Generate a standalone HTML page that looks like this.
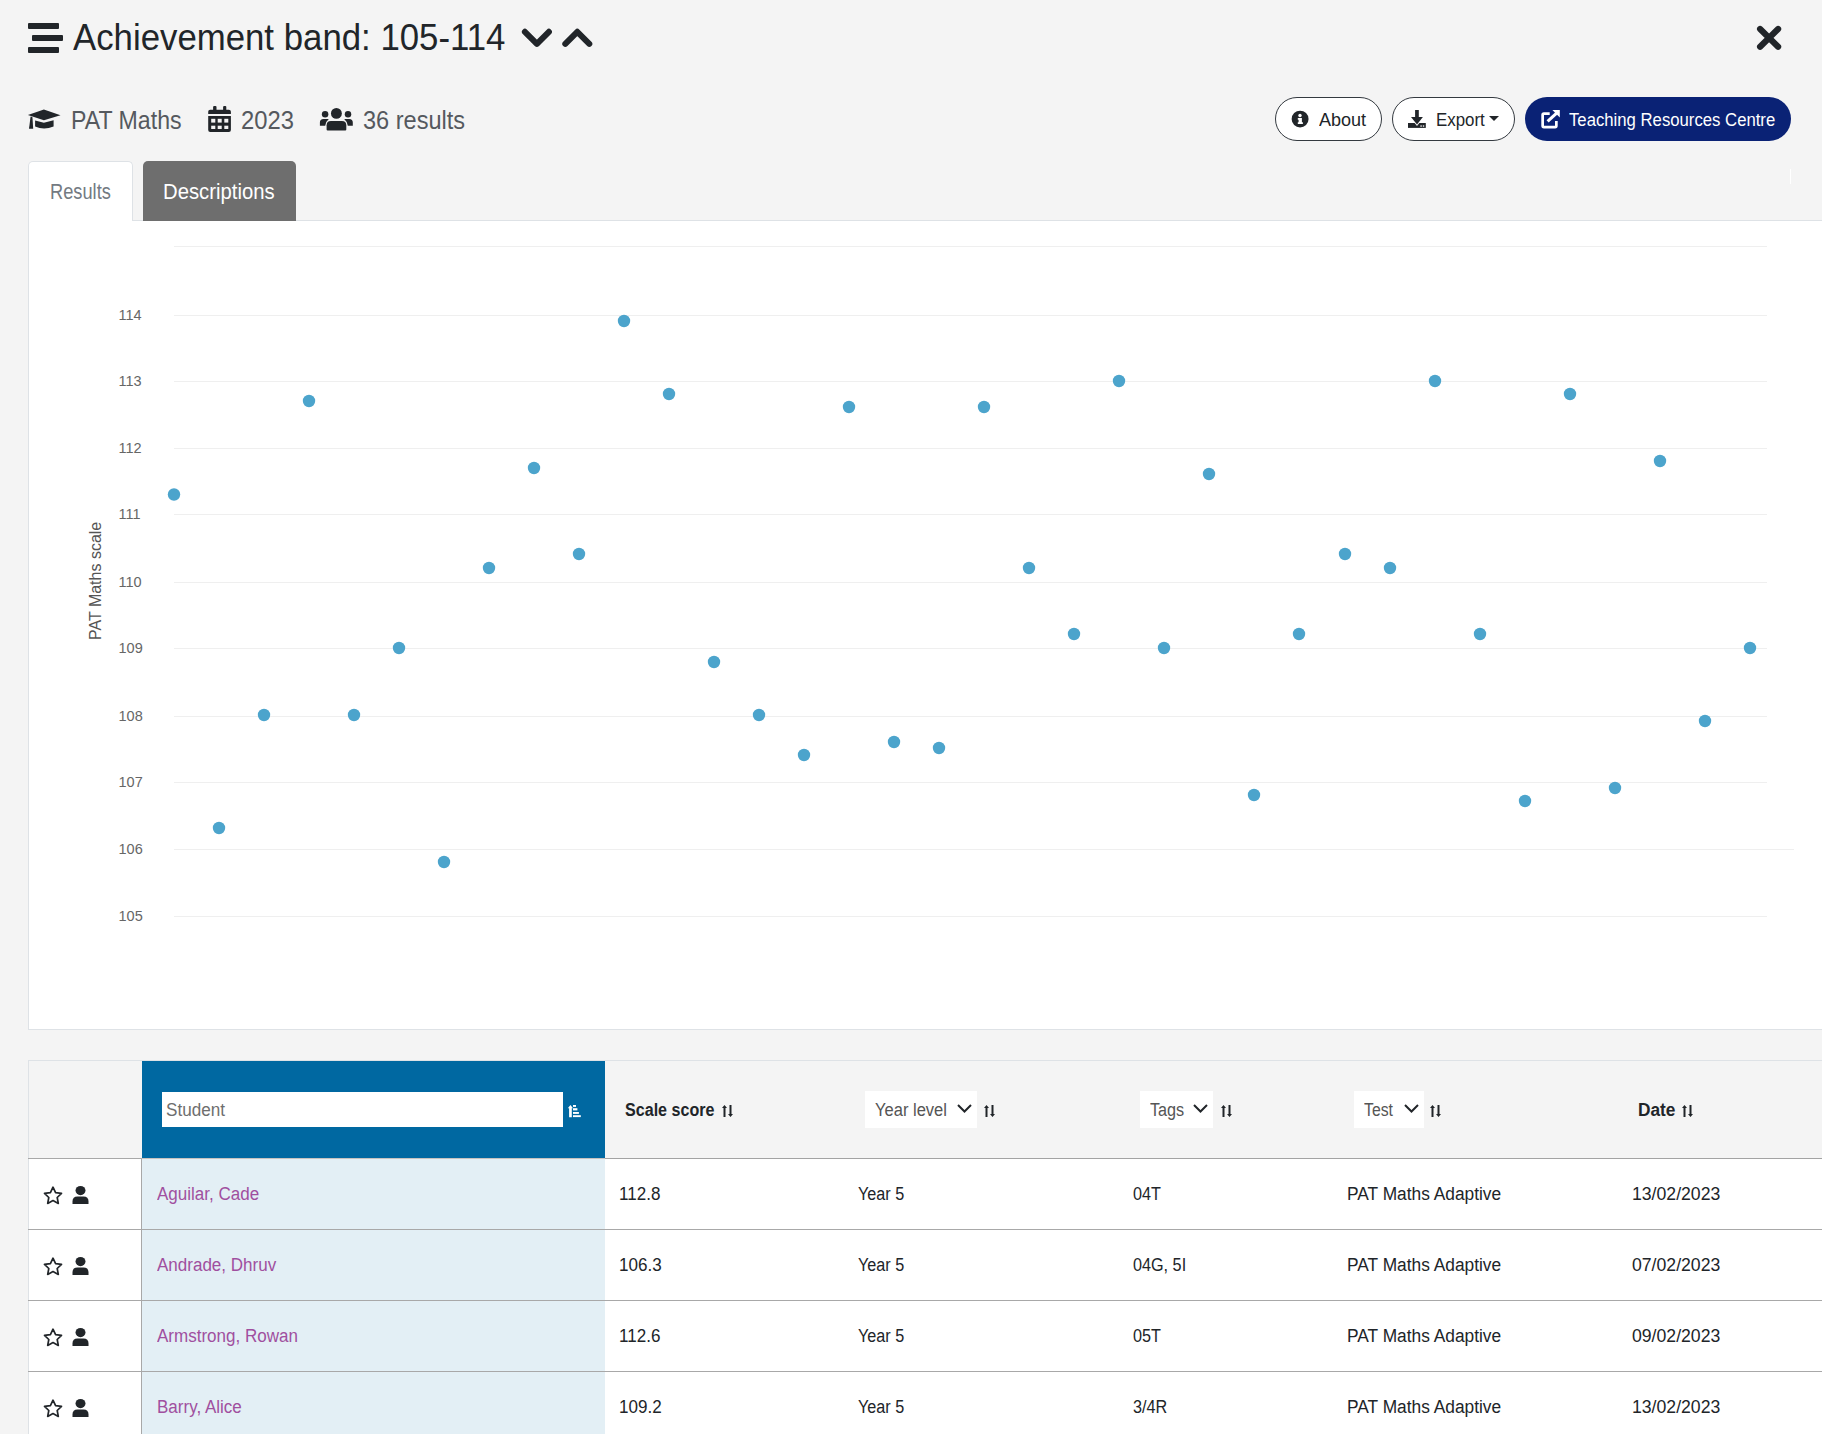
<!DOCTYPE html>
<html><head><meta charset="utf-8"><title>Achievement band</title>
<style>
html,body{margin:0;padding:0;}
body{width:1822px;height:1434px;overflow:hidden;position:relative;background:#f4f4f4;font-family:"Liberation Sans",sans-serif;}
.t{position:absolute;white-space:nowrap;transform-origin:0 0;}
.r{position:absolute;}
svg{position:absolute;overflow:visible;}
</style></head><body>
<div class="r" style="left:28px;top:23px;width:31px;height:6px;background:#212529;border-radius:1px;"></div>
<div class="r" style="left:32px;top:35px;width:31px;height:6px;background:#212529;border-radius:1px;"></div>
<div class="r" style="left:28px;top:47px;width:31px;height:6px;background:#212529;border-radius:1px;"></div>
<div class="t" style="left:73px;top:20.33px;font-size:36px;line-height:36px;color:#212529;transform:scaleX(0.966);">Achievement band: 105-114</div>
<svg style="left:0;top:0" width="1822" height="60"><path d="M524.9 31.8 L536.9 43.9 L548.9 31.8" fill="none" stroke="#212529" stroke-width="6" stroke-linecap="round" stroke-linejoin="round"/><path d="M565.3 43.9 L577.3 31.8 L589.3 43.9" fill="none" stroke="#212529" stroke-width="6" stroke-linecap="round" stroke-linejoin="round"/><path d="M1760.1 29 L1778.1 46.8 M1778.1 29 L1760.1 46.8" fill="none" stroke="#212529" stroke-width="6.2" stroke-linecap="round"/></svg>
<svg style="left:24px;top:102px" width="40" height="34" viewBox="0 0 40 34">
<path d="M3.9 13 L19.9 7.6 L36.5 13.2 L19.9 18.3 Z" fill="#212529"/>
<path d="M11.1 18.6 L19.9 20.8 L29.6 18.3 L29.6 24.6 Q19.9 28.6 11.1 24.6 Z" fill="#212529"/>
<path d="M6.6 14.5 L8.4 15 L9.2 26.8 L5 26.8 Z" fill="#212529"/>
</svg>
<div class="t" style="left:71px;top:106.99px;font-size:26px;line-height:26px;color:#55595e;transform:scaleX(0.89);">PAT Maths</div>
<svg style="left:202px;top:102px" width="36" height="34" viewBox="0 0 36 34">
<rect x="11.1" y="4" width="3.4" height="5" rx="1" fill="#212529"/><rect x="21.1" y="4" width="3.2" height="5" rx="1" fill="#212529"/>
<path d="M6.2 9.8 Q6.2 7.8 8.2 7.8 L26.9 7.8 Q28.9 7.8 28.9 9.8 L28.9 11.9 L6.2 11.9 Z" fill="#212529"/>
<path d="M6.2 14 L28.9 14 L28.9 27.9 Q28.9 29.9 26.9 29.9 L8.2 29.9 Q6.2 29.9 6.2 27.9 Z" fill="#212529"/>
<g fill="#f4f4f4"><rect x="9.2" y="16.8" width="4.1" height="3.8"/><rect x="15.7" y="16.8" width="4" height="3.8"/><rect x="22.3" y="16.8" width="4" height="3.8"/>
<rect x="9.2" y="23.7" width="4.1" height="3.3"/><rect x="15.7" y="23.7" width="4" height="3.3"/><rect x="22.3" y="23.7" width="4" height="3.3"/></g>
</svg>
<div class="t" style="left:241px;top:106.99px;font-size:26px;line-height:26px;color:#55595e;transform:scaleX(0.915);">2023</div>
<svg style="left:315px;top:102px" width="45" height="34" viewBox="0 0 45 34">
<circle cx="21.4" cy="11.4" r="5.45" fill="#212529"/><circle cx="10.1" cy="12.2" r="3.25" fill="#212529"/><circle cx="33" cy="12.2" r="3.25" fill="#212529"/>
<path d="M11.6 27.4 L11.6 23.3 Q11.6 19 15.9 19 L26.9 19 Q31.3 19 31.3 23.3 L31.3 27.4 Q31.3 28.4 30.3 28.4 L12.6 28.4 Q11.6 28.4 11.6 27.4 Z" fill="#212529"/>
<path d="M4.9 23.7 L4.9 20.6 Q4.9 17 8.5 17 L13.8 17 Q10.9 19.3 10.2 23.7 Z" fill="#212529"/>
<path d="M37.8 23.7 L37.8 20.6 Q37.8 17 34.2 17 L29.2 17 Q32.1 19.3 32.8 23.7 Z" fill="#212529"/>
</svg>
<div class="t" style="left:363px;top:106.99px;font-size:26px;line-height:26px;color:#55595e;transform:scaleX(0.905);">36 results</div>
<div class="r" style="left:1275px;top:97px;width:105px;height:42px;border:1px solid #343a40;border-radius:22px;background:#fff;"></div>
<svg style="left:1291px;top:110px" width="18" height="18" viewBox="0 0 18 18"><circle cx="9.1" cy="9.1" r="8.45" fill="#212529"/><circle cx="9" cy="5.5" r="1.7" fill="#fff"/><path d="M6.8 8 L10.9 8 L10.9 12.2 L11.9 12.2 L11.9 14 L6.8 14 L6.8 12.2 L7.6 12.2 L7.6 9.8 L6.8 9.8 Z" fill="#fff"/></svg>
<div class="t" style="left:1319px;top:111.79px;font-size:17.5px;line-height:17.5px;color:#212529;transform:scaleX(1.03);">About</div>
<div class="r" style="left:1392px;top:97px;width:121px;height:42px;border:1px solid #343a40;border-radius:22px;background:#fff;"></div>
<svg style="left:1408px;top:110px" width="18" height="18" viewBox="0 0 18 18"><rect x="0" y="13" width="17.8" height="4.9" fill="#212529"/><path d="M1.6 6.5 L16.4 6.5 L9 15.9 Z" fill="#fff"/><rect x="7.1" y="0" width="3.7" height="8.5" fill="#212529"/><path d="M3 7.1 L14.9 7.1 L9 14.4 Z" fill="#212529"/><rect x="12.4" y="15.4" width="1.4" height="1.3" fill="#fff"/><rect x="14.8" y="15.4" width="1.4" height="1.3" fill="#fff"/></svg>
<div class="t" style="left:1436px;top:111.79px;font-size:17.5px;line-height:17.5px;color:#212529;transform:scaleX(0.965);">Export</div>
<svg style="left:1489px;top:116px" width="10" height="5"><path d="M0 0 L10 0 L5 5 Z" fill="#212529"/></svg>
<div class="r" style="left:1525px;top:97px;width:266px;height:44px;border-radius:22px;background:#0a2275;"></div>
<svg style="left:1541px;top:110px" width="20" height="19" viewBox="0 0 20 19"><path d="M8.7 3.55 L2.9 3.55 Q1.65 3.55 1.65 4.8 L1.65 15.8 Q1.65 17.05 2.9 17.05 L14.1 17.05 Q15.35 17.05 15.35 15.8 L15.35 11" fill="none" stroke="#fff" stroke-width="2.7"/><path d="M6.6 11.3 L16.2 2.6" stroke="#fff" stroke-width="3.1"/><path d="M11.4 0.1 L18.8 0.1 L18.8 7.5 Z" fill="#fff"/></svg>
<div class="t" style="left:1569px;top:111.69px;font-size:17.5px;line-height:17.5px;color:#fff;transform:scaleX(0.955);">Teaching Resources Centre</div>
<div class="r" style="left:1790px;top:169px;width:1px;height:15px;background:#ffffff;"></div>
<div class="r" style="left:28px;top:220px;width:1800px;height:808px;background:#fff;border:1px solid #dee2e6;"></div>
<div class="r" style="left:28px;top:161px;width:103px;height:59px;background:#fff;border:1px solid #dee2e6;border-bottom:none;border-radius:5px 5px 0 0;"></div>
<div class="t" style="left:49.5px;top:180.20px;font-size:22.8px;line-height:22.8px;color:#737a82;transform:scaleX(0.8);">Results</div>
<div class="r" style="left:143px;top:161px;width:153px;height:60px;background:#6e6e6e;border-radius:5px 5px 0 0;"></div>
<div class="t" style="left:163px;top:180.20px;font-size:22.8px;line-height:22.8px;color:#fff;transform:scaleX(0.89);">Descriptions</div>
<div class="r" style="left:174px;top:246px;width:1593px;height:1px;background:#efefef;"></div>
<div class="r" style="left:174px;top:315px;width:1593px;height:1px;background:#efefef;"></div>
<div class="t" style="left:118.5px;top:307.73px;font-size:14.5px;line-height:14.5px;color:#666666;">114</div>
<div class="r" style="left:174px;top:381px;width:1593px;height:1px;background:#efefef;"></div>
<div class="t" style="left:118.5px;top:373.73px;font-size:14.5px;line-height:14.5px;color:#666666;">113</div>
<div class="r" style="left:174px;top:448px;width:1593px;height:1px;background:#efefef;"></div>
<div class="t" style="left:118.5px;top:440.73px;font-size:14.5px;line-height:14.5px;color:#666666;">112</div>
<div class="r" style="left:174px;top:514px;width:1593px;height:1px;background:#efefef;"></div>
<div class="t" style="left:118.5px;top:506.73px;font-size:14.5px;line-height:14.5px;color:#666666;">111</div>
<div class="r" style="left:174px;top:582px;width:1593px;height:1px;background:#efefef;"></div>
<div class="t" style="left:118.5px;top:574.73px;font-size:14.5px;line-height:14.5px;color:#666666;">110</div>
<div class="r" style="left:174px;top:648px;width:1593px;height:1px;background:#efefef;"></div>
<div class="t" style="left:118.5px;top:640.73px;font-size:14.5px;line-height:14.5px;color:#666666;">109</div>
<div class="r" style="left:174px;top:716px;width:1593px;height:1px;background:#efefef;"></div>
<div class="t" style="left:118.5px;top:708.73px;font-size:14.5px;line-height:14.5px;color:#666666;">108</div>
<div class="r" style="left:174px;top:782px;width:1593px;height:1px;background:#efefef;"></div>
<div class="t" style="left:118.5px;top:774.73px;font-size:14.5px;line-height:14.5px;color:#666666;">107</div>
<div class="r" style="left:174px;top:849px;width:1620px;height:1px;background:#efefef;"></div>
<div class="t" style="left:118.5px;top:841.73px;font-size:14.5px;line-height:14.5px;color:#666666;">106</div>
<div class="r" style="left:174px;top:916px;width:1593px;height:1px;background:#efefef;"></div>
<div class="t" style="left:118.5px;top:908.73px;font-size:14.5px;line-height:14.5px;color:#666666;">105</div>
<div class="t" style="left:101px;top:640px;font-size:16px;line-height:16px;color:#555;transform-origin:0 0;transform:rotate(-90deg) translateY(-13px);">PAT Maths scale</div>
<svg style="left:0;top:0" width="1822" height="1434"><circle cx="174" cy="494.5" r="6.2" fill="#4ca4cc"/><circle cx="219" cy="828" r="6.2" fill="#4ca4cc"/><circle cx="264" cy="715" r="6.2" fill="#4ca4cc"/><circle cx="309" cy="401" r="6.2" fill="#4ca4cc"/><circle cx="354" cy="715" r="6.2" fill="#4ca4cc"/><circle cx="399" cy="648" r="6.2" fill="#4ca4cc"/><circle cx="444" cy="862" r="6.2" fill="#4ca4cc"/><circle cx="489" cy="568" r="6.2" fill="#4ca4cc"/><circle cx="534" cy="468" r="6.2" fill="#4ca4cc"/><circle cx="579" cy="554" r="6.2" fill="#4ca4cc"/><circle cx="624" cy="321" r="6.2" fill="#4ca4cc"/><circle cx="669" cy="394" r="6.2" fill="#4ca4cc"/><circle cx="714" cy="662" r="6.2" fill="#4ca4cc"/><circle cx="759" cy="715" r="6.2" fill="#4ca4cc"/><circle cx="804" cy="755" r="6.2" fill="#4ca4cc"/><circle cx="849" cy="407" r="6.2" fill="#4ca4cc"/><circle cx="894" cy="742" r="6.2" fill="#4ca4cc"/><circle cx="939" cy="748" r="6.2" fill="#4ca4cc"/><circle cx="984" cy="407" r="6.2" fill="#4ca4cc"/><circle cx="1029" cy="568" r="6.2" fill="#4ca4cc"/><circle cx="1074" cy="634" r="6.2" fill="#4ca4cc"/><circle cx="1119" cy="381" r="6.2" fill="#4ca4cc"/><circle cx="1164" cy="648" r="6.2" fill="#4ca4cc"/><circle cx="1209" cy="474" r="6.2" fill="#4ca4cc"/><circle cx="1254" cy="795" r="6.2" fill="#4ca4cc"/><circle cx="1299" cy="634" r="6.2" fill="#4ca4cc"/><circle cx="1345" cy="554" r="6.2" fill="#4ca4cc"/><circle cx="1390" cy="568" r="6.2" fill="#4ca4cc"/><circle cx="1435" cy="381" r="6.2" fill="#4ca4cc"/><circle cx="1480" cy="634" r="6.2" fill="#4ca4cc"/><circle cx="1525" cy="801" r="6.2" fill="#4ca4cc"/><circle cx="1570" cy="394" r="6.2" fill="#4ca4cc"/><circle cx="1615" cy="788" r="6.2" fill="#4ca4cc"/><circle cx="1660" cy="461" r="6.2" fill="#4ca4cc"/><circle cx="1705" cy="721" r="6.2" fill="#4ca4cc"/><circle cx="1750" cy="648" r="6.2" fill="#4ca4cc"/></svg>
<div class="r" style="left:28px;top:1060px;width:1800px;height:400px;background:#f4f4f4;border-left:1px solid #dee2e6;border-top:1px solid #dee2e6;"></div>
<div class="r" style="left:142px;top:1061px;width:463px;height:97px;background:#0068a1;"></div>
<div class="r" style="left:162px;top:1092px;width:401px;height:35px;background:#fff;"></div>
<div class="t" style="left:165.5px;top:1100.76px;font-size:18px;line-height:18px;color:#6e6e6e;transform:scaleX(0.95);">Student</div>
<svg style="left:567px;top:1105px" width="14" height="13" viewBox="0 0 14 13"><path d="M0.8 3.2 L3.45 0 L6 3.2 L4.8 3.2 L4.8 12.2 L2.1 12.2 L2.1 3.2 Z" fill="#fff"/><rect x="6" y="0" width="3" height="1.9" fill="#fff"/><rect x="6" y="3.2" width="4.4" height="2.2" fill="#fff"/><rect x="6" y="7" width="5.9" height="1.9" fill="#fff"/><rect x="6" y="10.2" width="7.8" height="1.9" fill="#fff"/></svg>
<div class="t" style="left:625px;top:1100.76px;font-size:18px;line-height:18px;color:#212529;font-weight:bold;transform:scaleX(0.894);">Scale score</div>
<svg style="left:721.5px;top:1105px" width="11" height="12" viewBox="0 0 11 12"><path d="M0 3 L2.5 0 L5 3 L3.5 3 L3.5 12 L1.5 12 L1.5 3 Z" fill="#212529"/><path d="M6 9 L7.5 9 L7.5 0 L9.5 0 L9.5 9 L11 9 L8.5 12 Z" fill="#212529"/></svg>
<div class="r" style="left:865px;top:1091px;width:112px;height:37px;background:#fff;"></div>
<div class="t" style="left:875px;top:1100.76px;font-size:18px;line-height:18px;color:#555;transform:scaleX(0.918);">Year level</div>
<svg style="left:957px;top:1104px" width="15" height="9"><path d="M1 1 L7.5 7.5 L14 1" fill="none" stroke="#212529" stroke-width="2"/></svg>
<svg style="left:984px;top:1105px" width="11" height="12" viewBox="0 0 11 12"><path d="M0 3 L2.5 0 L5 3 L3.5 3 L3.5 12 L1.5 12 L1.5 3 Z" fill="#212529"/><path d="M6 9 L7.5 9 L7.5 0 L9.5 0 L9.5 9 L11 9 L8.5 12 Z" fill="#212529"/></svg>
<div class="r" style="left:1140px;top:1091px;width:73px;height:37px;background:#fff;"></div>
<div class="t" style="left:1150px;top:1100.76px;font-size:18px;line-height:18px;color:#555;transform:scaleX(0.9);">Tags</div>
<svg style="left:1193px;top:1104px" width="15" height="9"><path d="M1 1 L7.5 7.5 L14 1" fill="none" stroke="#212529" stroke-width="2"/></svg>
<svg style="left:1220.5px;top:1105px" width="11" height="12" viewBox="0 0 11 12"><path d="M0 3 L2.5 0 L5 3 L3.5 3 L3.5 12 L1.5 12 L1.5 3 Z" fill="#212529"/><path d="M6 9 L7.5 9 L7.5 0 L9.5 0 L9.5 9 L11 9 L8.5 12 Z" fill="#212529"/></svg>
<div class="r" style="left:1354px;top:1091px;width:70px;height:37px;background:#fff;"></div>
<div class="t" style="left:1364.3px;top:1100.76px;font-size:18px;line-height:18px;color:#555;transform:scaleX(0.876);">Test</div>
<svg style="left:1404px;top:1104px" width="15" height="9"><path d="M1 1 L7.5 7.5 L14 1" fill="none" stroke="#212529" stroke-width="2"/></svg>
<svg style="left:1430.3px;top:1105px" width="11" height="12" viewBox="0 0 11 12"><path d="M0 3 L2.5 0 L5 3 L3.5 3 L3.5 12 L1.5 12 L1.5 3 Z" fill="#212529"/><path d="M6 9 L7.5 9 L7.5 0 L9.5 0 L9.5 9 L11 9 L8.5 12 Z" fill="#212529"/></svg>
<div class="t" style="left:1638.3px;top:1100.76px;font-size:18px;line-height:18px;color:#212529;font-weight:bold;transform:scaleX(0.96);">Date</div>
<svg style="left:1682px;top:1105px" width="11" height="12" viewBox="0 0 11 12"><path d="M0 3 L2.5 0 L5 3 L3.5 3 L3.5 12 L1.5 12 L1.5 3 Z" fill="#212529"/><path d="M6 9 L7.5 9 L7.5 0 L9.5 0 L9.5 9 L11 9 L8.5 12 Z" fill="#212529"/></svg>
<div class="r" style="left:28px;top:1158px;width:114px;height:1px;background:#a8a8a8;"></div>
<div class="r" style="left:142px;top:1158px;width:463px;height:1px;background:#c6c2bf;"></div>
<div class="r" style="left:605px;top:1158px;width:1217px;height:1px;background:#a3a3a3;"></div>
<div class="r" style="left:29px;top:1159px;width:113px;height:70px;background:#fff;"></div>
<div class="r" style="left:142px;top:1159px;width:463px;height:70px;background:#e3eff5;"></div>
<div class="r" style="left:605px;top:1159px;width:1217px;height:70px;background:#fff;"></div>
<div class="r" style="left:28px;top:1229px;width:1794px;height:1px;background:#a8a8a8;"></div>
<div class="r" style="left:141px;top:1159px;width:1px;height:71px;background:#a8a8a8;"></div>
<svg style="left:42.6px;top:1186px" width="20" height="19" viewBox="0 0 20 19"><path d="M10 1.2 L12.6 6.6 L18.5 7.4 L14.2 11.5 L15.3 17.4 L10 14.6 L4.7 17.4 L5.8 11.5 L1.5 7.4 L7.4 6.6 Z" fill="none" stroke="#212529" stroke-width="1.7" stroke-linejoin="round"/></svg>
<svg style="left:71.5px;top:1186px" width="17" height="18" viewBox="0 0 17 18"><ellipse cx="8.5" cy="4.6" rx="5" ry="4.6" fill="#212529"/><path d="M0.5 18 L0.5 15.5 Q0.5 10.6 5.5 10.6 L11.5 10.6 Q16.5 10.6 16.5 15.5 L16.5 18 Z" fill="#212529"/></svg>
<div class="t" style="left:157px;top:1184.76px;font-size:18px;line-height:18px;color:#a04f9f;transform:scaleX(0.945);">Aguilar, Cade</div>
<div class="t" style="left:618.5px;top:1184.76px;font-size:18px;line-height:18px;color:#212529;transform:scaleX(0.947);">112.8</div>
<div class="t" style="left:857.6px;top:1184.76px;font-size:18px;line-height:18px;color:#212529;transform:scaleX(0.9);">Year 5</div>
<div class="t" style="left:1133px;top:1184.76px;font-size:18px;line-height:18px;color:#212529;transform:scaleX(0.9);">04T</div>
<div class="t" style="left:1346.8px;top:1184.76px;font-size:18px;line-height:18px;color:#212529;transform:scaleX(0.963);">PAT Maths Adaptive</div>
<div class="t" style="left:1631.5px;top:1184.76px;font-size:18px;line-height:18px;color:#212529;transform:scaleX(0.98);">13/02/2023</div>
<div class="r" style="left:29px;top:1230px;width:113px;height:70px;background:#fff;"></div>
<div class="r" style="left:142px;top:1230px;width:463px;height:70px;background:#e3eff5;"></div>
<div class="r" style="left:605px;top:1230px;width:1217px;height:70px;background:#fff;"></div>
<div class="r" style="left:28px;top:1300px;width:1794px;height:1px;background:#a8a8a8;"></div>
<div class="r" style="left:141px;top:1230px;width:1px;height:71px;background:#a8a8a8;"></div>
<svg style="left:42.6px;top:1257px" width="20" height="19" viewBox="0 0 20 19"><path d="M10 1.2 L12.6 6.6 L18.5 7.4 L14.2 11.5 L15.3 17.4 L10 14.6 L4.7 17.4 L5.8 11.5 L1.5 7.4 L7.4 6.6 Z" fill="none" stroke="#212529" stroke-width="1.7" stroke-linejoin="round"/></svg>
<svg style="left:71.5px;top:1257px" width="17" height="18" viewBox="0 0 17 18"><ellipse cx="8.5" cy="4.6" rx="5" ry="4.6" fill="#212529"/><path d="M0.5 18 L0.5 15.5 Q0.5 10.6 5.5 10.6 L11.5 10.6 Q16.5 10.6 16.5 15.5 L16.5 18 Z" fill="#212529"/></svg>
<div class="t" style="left:157px;top:1255.76px;font-size:18px;line-height:18px;color:#a04f9f;transform:scaleX(0.945);">Andrade, Dhruv</div>
<div class="t" style="left:618.5px;top:1255.76px;font-size:18px;line-height:18px;color:#212529;transform:scaleX(0.947);">106.3</div>
<div class="t" style="left:857.6px;top:1255.76px;font-size:18px;line-height:18px;color:#212529;transform:scaleX(0.9);">Year 5</div>
<div class="t" style="left:1133px;top:1255.76px;font-size:18px;line-height:18px;color:#212529;transform:scaleX(0.9);">04G, 5I</div>
<div class="t" style="left:1346.8px;top:1255.76px;font-size:18px;line-height:18px;color:#212529;transform:scaleX(0.963);">PAT Maths Adaptive</div>
<div class="t" style="left:1631.5px;top:1255.76px;font-size:18px;line-height:18px;color:#212529;transform:scaleX(0.98);">07/02/2023</div>
<div class="r" style="left:29px;top:1301px;width:113px;height:70px;background:#fff;"></div>
<div class="r" style="left:142px;top:1301px;width:463px;height:70px;background:#e3eff5;"></div>
<div class="r" style="left:605px;top:1301px;width:1217px;height:70px;background:#fff;"></div>
<div class="r" style="left:28px;top:1371px;width:1794px;height:1px;background:#a8a8a8;"></div>
<div class="r" style="left:141px;top:1301px;width:1px;height:71px;background:#a8a8a8;"></div>
<svg style="left:42.6px;top:1328px" width="20" height="19" viewBox="0 0 20 19"><path d="M10 1.2 L12.6 6.6 L18.5 7.4 L14.2 11.5 L15.3 17.4 L10 14.6 L4.7 17.4 L5.8 11.5 L1.5 7.4 L7.4 6.6 Z" fill="none" stroke="#212529" stroke-width="1.7" stroke-linejoin="round"/></svg>
<svg style="left:71.5px;top:1328px" width="17" height="18" viewBox="0 0 17 18"><ellipse cx="8.5" cy="4.6" rx="5" ry="4.6" fill="#212529"/><path d="M0.5 18 L0.5 15.5 Q0.5 10.6 5.5 10.6 L11.5 10.6 Q16.5 10.6 16.5 15.5 L16.5 18 Z" fill="#212529"/></svg>
<div class="t" style="left:157px;top:1326.76px;font-size:18px;line-height:18px;color:#a04f9f;transform:scaleX(0.945);">Armstrong, Rowan</div>
<div class="t" style="left:618.5px;top:1326.76px;font-size:18px;line-height:18px;color:#212529;transform:scaleX(0.947);">112.6</div>
<div class="t" style="left:857.6px;top:1326.76px;font-size:18px;line-height:18px;color:#212529;transform:scaleX(0.9);">Year 5</div>
<div class="t" style="left:1133px;top:1326.76px;font-size:18px;line-height:18px;color:#212529;transform:scaleX(0.9);">05T</div>
<div class="t" style="left:1346.8px;top:1326.76px;font-size:18px;line-height:18px;color:#212529;transform:scaleX(0.963);">PAT Maths Adaptive</div>
<div class="t" style="left:1631.5px;top:1326.76px;font-size:18px;line-height:18px;color:#212529;transform:scaleX(0.98);">09/02/2023</div>
<div class="r" style="left:29px;top:1372px;width:113px;height:70px;background:#fff;"></div>
<div class="r" style="left:142px;top:1372px;width:463px;height:70px;background:#e3eff5;"></div>
<div class="r" style="left:605px;top:1372px;width:1217px;height:70px;background:#fff;"></div>
<div class="r" style="left:28px;top:1442px;width:1794px;height:1px;background:#a8a8a8;"></div>
<div class="r" style="left:141px;top:1372px;width:1px;height:71px;background:#a8a8a8;"></div>
<svg style="left:42.6px;top:1399px" width="20" height="19" viewBox="0 0 20 19"><path d="M10 1.2 L12.6 6.6 L18.5 7.4 L14.2 11.5 L15.3 17.4 L10 14.6 L4.7 17.4 L5.8 11.5 L1.5 7.4 L7.4 6.6 Z" fill="none" stroke="#212529" stroke-width="1.7" stroke-linejoin="round"/></svg>
<svg style="left:71.5px;top:1399px" width="17" height="18" viewBox="0 0 17 18"><ellipse cx="8.5" cy="4.6" rx="5" ry="4.6" fill="#212529"/><path d="M0.5 18 L0.5 15.5 Q0.5 10.6 5.5 10.6 L11.5 10.6 Q16.5 10.6 16.5 15.5 L16.5 18 Z" fill="#212529"/></svg>
<div class="t" style="left:157px;top:1397.76px;font-size:18px;line-height:18px;color:#a04f9f;transform:scaleX(0.945);">Barry, Alice</div>
<div class="t" style="left:618.5px;top:1397.76px;font-size:18px;line-height:18px;color:#212529;transform:scaleX(0.947);">109.2</div>
<div class="t" style="left:857.6px;top:1397.76px;font-size:18px;line-height:18px;color:#212529;transform:scaleX(0.9);">Year 5</div>
<div class="t" style="left:1133px;top:1397.76px;font-size:18px;line-height:18px;color:#212529;transform:scaleX(0.9);">3/4R</div>
<div class="t" style="left:1346.8px;top:1397.76px;font-size:18px;line-height:18px;color:#212529;transform:scaleX(0.963);">PAT Maths Adaptive</div>
<div class="t" style="left:1631.5px;top:1397.76px;font-size:18px;line-height:18px;color:#212529;transform:scaleX(0.98);">13/02/2023</div>
</body></html>
